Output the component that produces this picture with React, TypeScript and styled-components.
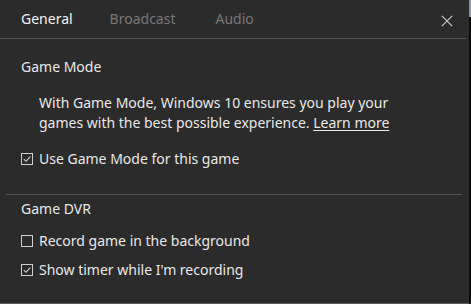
import React from "react";
import styled, { createGlobalStyle } from "styled-components";

const GlobalStyle = createGlobalStyle`
  html, body {
    margin: 0;
    padding: 0;
    background: #2b2b2b;
  }
  body {
    font-family: "Noto Sans", "Open Sans", sans-serif;
  }
`;

const Window = styled.div`
  width: 471px;
  height: 304px;
  display: flex;
  overflow: hidden;
  background: #2b2b2b;
`;

const Panel = styled.div`
  flex: 1;
  display: flex;
  flex-direction: column;
  border-bottom: 1px solid #5a5a5a;
`;

const Edge = styled.div`
  width: 2px;
  background: linear-gradient(#8a96a3 0, #8a96a3 17px, #0a0a0a 17px);
`;

const Header = styled.div`
  height: 38px;
  display: flex;
  align-items: center;
  padding-left: 21px;
  padding-right: 13px;
  border-bottom: 1px solid #555;
  margin-right: 3px;
`;

const Tab = styled.div<{ $gap: number; $active?: boolean }>`
  font-size: 14px;
  color: ${(p) => (p.$active ? "#f2f2f2" : "#767676")};
  margin-right: ${(p) => p.$gap}px;
  line-height: 20px;
  margin-top: -1px;
`;

const Close = styled.div`
  margin-left: auto;
  width: 12px;
  height: 12px;
  display: flex;
  margin-top: 4px;
`;

const Section = styled.div<{ $divided?: boolean }>`
  padding: 18px 0 0 21px;
  ${(p) =>
    p.$divided
      ? "border-top: 1px solid #555; margin: 25px 7px 0 6px; padding: 4px 0 0 15px;"
      : ""}
`;

const Heading = styled.div`
  font-size: 14px;
  color: #e8e8e8;
  line-height: 20px;
`;

const Paragraph = styled.div`
  font-size: 14px;
  color: #e8e8e8;
  line-height: 20px;
  padding-left: 18px;
  margin-top: 16px;
`;

const Link = styled.span`
  text-decoration: underline;
  text-underline-offset: 2px;
`;

const Option = styled.div<{ $gap: number }>`
  display: flex;
  align-items: center;
  gap: 6px;
  font-size: 14px;
  color: #e8e8e8;
  line-height: 20px;
  margin-top: ${(p) => p.$gap}px;
`;

const Box = styled.div`
  width: 10px;
  height: 10px;
  border: 1px solid #d0d0d0;
  display: flex;
  align-items: center;
  justify-content: center;
`;

const Check = ({ on }: { on: boolean }) => (
  <Box>
    {on && (
      <svg width="10" height="10" viewBox="0 0 10 10">
        <path d="M1.8 5.2 L4 7.3 L8.3 2.6" stroke="#d8d8d8" strokeWidth="1.1" fill="none" />
      </svg>
    )}
  </Box>
);

export default function App() {
  return (
    <Window>
      <GlobalStyle />
      <Panel>
        <Header>
          <Tab $active $gap={37}>General</Tab>
          <Tab $gap={40}>Broadcast</Tab>
          <Tab $gap={0}>Audio</Tab>
          <Close>
            <svg width="12" height="12" viewBox="0 0 12 12">
              <path d="M0.8 0.8 L11.2 11.2 M11.2 0.8 L0.8 11.2" stroke="#c8c8c8" strokeWidth="1.2" />
            </svg>
          </Close>
        </Header>
        <Section>
          <Heading>Game Mode</Heading>
          <Paragraph>
            With Game Mode, Windows 10 ensures you play your
            <br />
            games with the best possible experience. <Link>Learn more</Link>
          </Paragraph>
          <Option $gap={16}>
            <Check on />
            Use Game Mode for this game
          </Option>
        </Section>
        <Section $divided>
          <Heading>Game DVR</Heading>
          <Option $gap={12}>
            <Check on={false} />
            Record game in the background
          </Option>
          <Option $gap={9}>
            <Check on />
            Show timer while I'm recording
          </Option>
        </Section>
      </Panel>
      <Edge />
    </Window>
  );
}
